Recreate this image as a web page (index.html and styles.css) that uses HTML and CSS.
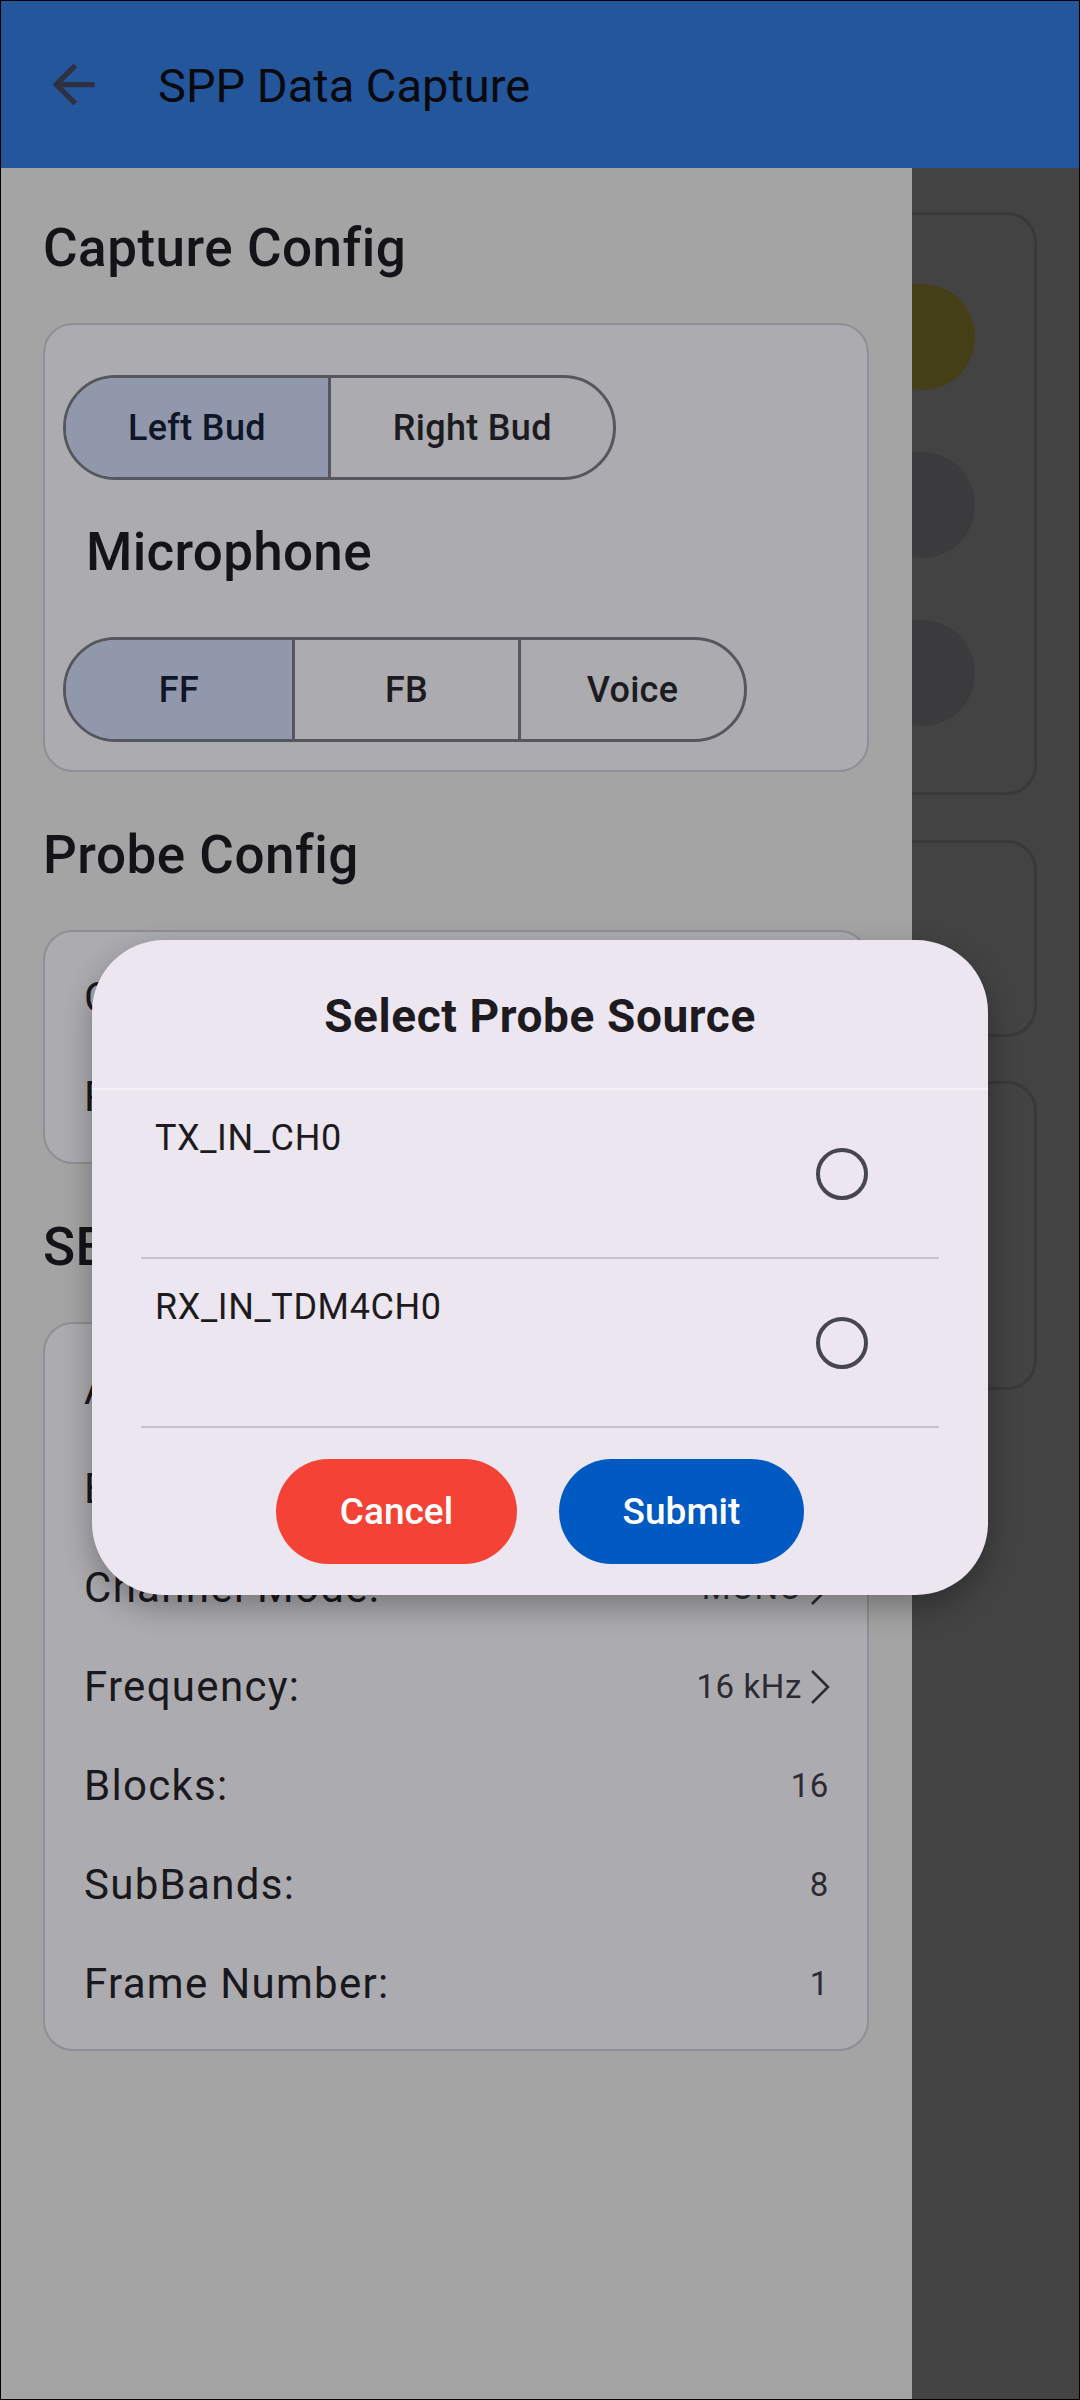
FILE: index.html
```html
<!DOCTYPE html>
<html lang="en">
<head>
    <meta charset="UTF-8">
    <meta name="viewport" content="width=1080">
    <title>SPP Data Capture</title>
    <link rel="stylesheet" href="styles.css">
</head>
<body>
<div class="app">
    <div class="topbar">
        <svg class="back" viewBox="0 0 24 24"><path d="M20 11H7.83l5.59-5.59L12 4l-8 8 8 8 1.41-1.41L7.83 13H20v-2z"/></svg>
        <h1>SPP Data Capture</h1>
    </div>

    <div class="main">
        <div class="panel">
            <h2 class="section-title">Capture Config</h2>
            <div class="card capture">
                <div class="seg bud">
                    <div class="seg-item active">Left Bud</div>
                    <div class="seg-item">Right Bud</div>
                </div>
                <h3 class="sub-title">Microphone</h3>
                <div class="seg mic">
                    <div class="seg-item active">FF</div>
                    <div class="seg-item">FB</div>
                    <div class="seg-item">Voice</div>
                </div>
            </div>

            <h2 class="section-title">Probe Config</h2>
            <div class="card list">
                <div class="row">
                    <span class="label">Core:</span>
                    <span class="value">DSP<svg class="chev" viewBox="0 0 22 36"><path d="M3 2 L19 18 L3 34"/></svg></span>
                </div>
                <div class="row">
                    <span class="label">Probe Source:</span>
                    <span class="value">TX_IN_CH0<svg class="chev" viewBox="0 0 22 36"><path d="M3 2 L19 18 L3 34"/></svg></span>
                </div>
            </div>

            <h2 class="section-title">SBC Config</h2>
            <div class="card list">
                <div class="row">
                    <span class="label">Allocation Method:</span>
                    <span class="value">Loudness<svg class="chev" viewBox="0 0 22 36"><path d="M3 2 L19 18 L3 34"/></svg></span>
                </div>
                <div class="row">
                    <span class="label">Bitpool:</span>
                    <span class="value">32</span>
                </div>
                <div class="row">
                    <span class="label">Channel Mode:</span>
                    <span class="value">MONO<svg class="chev" viewBox="0 0 22 36"><path d="M3 2 L19 18 L3 34"/></svg></span>
                </div>
                <div class="row">
                    <span class="label">Frequency:</span>
                    <span class="value">16 kHz<svg class="chev" viewBox="0 0 22 36"><path d="M3 2 L19 18 L3 34"/></svg></span>
                </div>
                <div class="row">
                    <span class="label">Blocks:</span>
                    <span class="value">16</span>
                </div>
                <div class="row">
                    <span class="label">SubBands:</span>
                    <span class="value">8</span>
                </div>
                <div class="row">
                    <span class="label">Frame Number:</span>
                    <span class="value">1</span>
                </div>
            </div>
        </div>

        <div class="strip">
            <div class="ghost first">
                <div class="dot olive"></div>
                <div class="dot"></div>
                <div class="dot"></div>
            </div>
            <div class="ghost second"></div>
            <div class="ghost third"></div>
        </div>
    </div>

    <div class="dialog">
        <div class="dialog-title">Select Probe Source</div>
        <div class="option">
            <span class="option-name">TX_IN_CH0</span>
            <span class="radio"></span>
        </div>
        <div class="option">
            <span class="option-name">RX_IN_TDM4CH0</span>
            <span class="radio"></span>
        </div>
        <div class="actions">
            <div class="btn cancel">Cancel</div>
            <div class="btn submit">Submit</div>
        </div>
    </div>
</div>
</body>
</html>
```

FILE: styles.css
```css
* {
    margin: 0;
    padding: 0;
    box-sizing: border-box;
}

body {
    font-family: Roboto, "Noto Sans", sans-serif;
    background: #000;
}

.app {
    position: relative;
    width: 1080px;
    height: 2400px;
    border: 1px solid #000;
    display: flex;
    flex-direction: column;
    overflow: hidden;
}

/* top bar */
.topbar {
    height: 167px;
    flex-shrink: 0;
    background-color: #23569b;
    display: flex;
    align-items: center;
    padding-top: 3px;
}
.topbar .back {
    width: 63px;
    height: 63px;
    margin-left: 41px;
    margin-top: -3px;
    fill: #2f3040;
}
.topbar h1 {
    margin-left: 53px;
    font-size: 47px;
    line-height: 56px;
    font-weight: 400;
    color: #0a0a0e;
}

.main {
    flex: 1;
    display: flex;
}

/* left panel */
.panel {
    width: 911px;
    flex-shrink: 0;
    background-color: #a4a4a4;
    padding: 0 43px 0 42px;
}

.section-title {
    font-size: 53px;
    line-height: 62px;
    font-weight: 500;
    letter-spacing: 0.5px;
    color: #141317;
    margin: 52px 0 44px;
}
.section-title:first-child {
    margin-top: 49px;
}

.card {
    background-color: #acabaf;
    border: 2px solid #8f8e94;
    border-radius: 30px;
}

.card.capture {
    padding: 50px 18px 28px;
}

.sub-title {
    font-size: 53px;
    line-height: 62px;
    font-weight: 500;
    letter-spacing: 0.3px;
    color: #141317;
    margin: 41px 0 54px 23px;
}

/* segmented buttons */
.seg {
    display: inline-flex;
    height: 105px;
    border: 3px solid #56575e;
    border-radius: 53px;
    overflow: hidden;
}
.seg-item {
    display: flex;
    align-items: center;
    justify-content: center;
    font-size: 36px;
    font-weight: 500;
    letter-spacing: 0.3px;
    color: #1c1b1f;
}
.seg-item + .seg-item {
    border-left: 3px solid #56575e;
}
.seg-item.active {
    background-color: #9198ab;
    color: #0e1628;
}
.seg.bud .seg-item {
    padding: 0 62px;
}
.seg.bud .seg-item + .seg-item {
    padding: 0 61px 0 62px;
}
.seg.mic .seg-item {
    width: 226px;
}

/* list cards */
.card.list {
    padding: 16px 38px 16px 39px;
}
.row {
    height: 99px;
    display: flex;
    align-items: center;
    justify-content: space-between;
}
.label {
    font-size: 42px;
    letter-spacing: 1.3px;
    color: #19181c;
}
.value {
    display: flex;
    align-items: center;
    font-size: 33px;
    letter-spacing: 0.6px;
    color: #2c2b31;
}
.chev {
    width: 22px;
    height: 36px;
    margin-left: 7px;
    margin-right: -2px;
    fill: none;
    stroke: #2b2a30;
    stroke-width: 2.5;
}

/* dimmed page to the right */
.strip {
    flex: 1;
    background-color: #434343;
    overflow: hidden;
    padding-top: 44px;
    display: flex;
    flex-direction: column;
    gap: 45px;
}
.ghost {
    flex-shrink: 0;
    margin-left: -46px;
    margin-right: 42px;
    border: 3px solid #393939;
    border-radius: 30px;
}
.ghost.first {
    height: 583px;
    padding-top: 69px;
    display: flex;
    flex-direction: column;
    gap: 62px;
}
.ghost.second {
    height: 197px;
}
.ghost.third {
    height: 309px;
    margin-top: -1px;
}
.dot {
    width: 106px;
    height: 106px;
    border-radius: 50%;
    background-color: #3b3b3d;
}
.dot.olive {
    background-color: #443f16;
}

/* dialog */
.dialog {
    position: absolute;
    left: 91px;
    top: 939px;
    width: 896px;
    background-color: #ece6f0;
    border-radius: 72px;
    box-shadow: 0 12px 30px rgba(0, 0, 0, 0.3);
}
.dialog-title {
    text-align: center;
    font-size: 46px;
    line-height: 54px;
    font-weight: 700;
    letter-spacing: 0.6px;
    color: #1d1b20;
    padding: 49px 0 45px;
    border-bottom: 2px solid #f4f2f5;
}
.option {
    margin: 0 49px;
    min-height: 169px;
    border-bottom: 2px solid #c5c2c9;
    display: flex;
    justify-content: space-between;
    align-items: flex-start;
    padding-left: 14px;
}
.option-name {
    padding-top: 27px;
    font-size: 36px;
    line-height: 42px;
    letter-spacing: 0.6px;
    color: #1d1b20;
}
.radio {
    align-self: center;
    width: 52px;
    height: 52px;
    margin-right: 71px;
    border: 4px solid #46464f;
    border-radius: 50%;
}
.actions {
    display: flex;
    justify-content: center;
    gap: 42px;
    padding: 31px 0 31px;
}
.btn {
    height: 105px;
    border-radius: 53px;
    display: flex;
    align-items: center;
    justify-content: center;
    font-size: 37px;
    font-weight: 500;
    color: #fff;
}
.btn.cancel {
    width: 241px;
    background-color: #f44336;
}
.btn.submit {
    width: 245px;
    background-color: #005ac2;
}
```
